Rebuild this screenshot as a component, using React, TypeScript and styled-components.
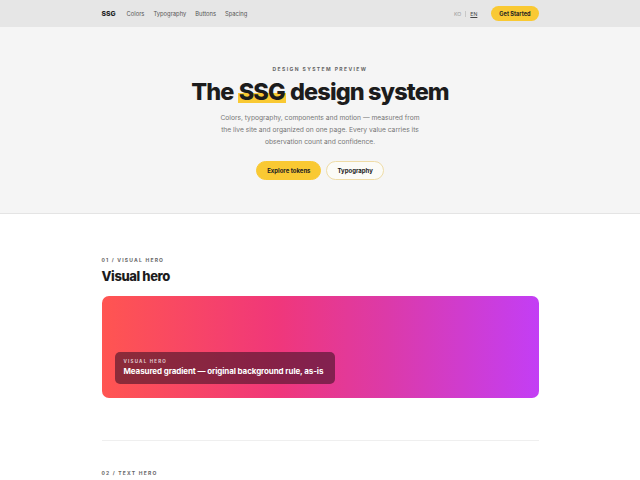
import React from "react";
import styled, { createGlobalStyle } from "styled-components";

const GlobalStyle = createGlobalStyle`
  html, body {
    margin: 0;
    padding: 0;
    background: #ffffff;
    font-family: Inter, "Liberation Sans", Arial, sans-serif;
    color: #1c1c1c;
  }
  * { box-sizing: border-box; }
`;

const Header = styled.header`
  height: 27px;
  background: #e6e6e6;
  display: flex;
  justify-content: center;
`;

const Inner = styled.div`
  width: 437px;
  display: flex;
  align-items: center;
  justify-content: space-between;
`;

const NavLeft = styled.nav`
  display: flex;
  align-items: center;
  gap: 9px;
`;

const Logo = styled.span`
  font-size: 6.8px;
  font-weight: 800;
  margin-right: 2px;
  color: #222;
`;

const NavLink = styled.a`
  font-size: 5.8px;
  color: #555;
  text-decoration: none;
`;

const NavRight = styled.div`
  display: flex;
  align-items: center;
  gap: 4px;
`;

const Lang = styled.span<{ $active?: boolean }>`
  font-size: 5.2px;
  color: ${(p) => (p.$active ? "#444" : "#999")};
  text-decoration: ${(p) => (p.$active ? "underline" : "none")};
`;

const Sep = styled.span`
  width: 1px;
  height: 6px;
  background: #c8c8c8;
`;

const SmallCta = styled.button`
  margin-left: 10px;
  height: 15px;
  padding: 0 8px;
  border: none;
  border-radius: 999px;
  background: #f9c933;
  font-family: inherit;
  font-size: 5.6px;
  font-weight: 700;
  color: #222;
`;

const Hero = styled.section`
  background: #f5f5f5;
  border-bottom: 1px solid #e4e4e4;
  height: 187px;
  display: flex;
  flex-direction: column;
  align-items: center;
  padding-top: 39px;
`;

const Eyebrow = styled.div`
  font-size: 5px;
  font-weight: 700;
  letter-spacing: 1.4px;
  color: #666;
`;

const Title = styled.h1`
  margin: 5px 0 0;
  font-size: 23.5px;
  font-weight: 800;
  letter-spacing: -0.9px;
  line-height: 30px;
  color: #1c1c1c;
`;

const Mark = styled.span`
  background: linear-gradient(transparent 55%, #f9c933 55%, #f9c933 90%, transparent 90%);
  padding: 0 1px;
`;

const Lead = styled.p`
  margin: 5px 0 0;
  width: 206px;
  text-align: center;
  font-size: 6.7px;
  line-height: 12px;
  color: #777;
`;

const Actions = styled.div`
  display: flex;
  gap: 5px;
  margin-top: 13px;
`;

const Pill = styled.button<{ $primary?: boolean }>`
  height: 19px;
  padding: 0 10px;
  border-radius: 999px;
  font-family: inherit;
  font-size: 6px;
  font-weight: 700;
  color: #222;
  background: ${(p) => (p.$primary ? "#f9c933" : "#fbfbf7")};
  border: 1px solid ${(p) => (p.$primary ? "#f9c933" : "#efdca6")};
`;

const Main = styled.main`
  display: flex;
  justify-content: center;
`;

const Column = styled.div`
  width: 437px;
  padding-top: 43px;
`;

const Section = styled.section`
  padding-bottom: 42px;
  border-bottom: 1px solid #efefef;
  margin-bottom: 29px;
`;

const Kicker = styled.div`
  font-size: 5px;
  font-weight: 700;
  letter-spacing: 1.2px;
  color: #666;
`;

const SectionTitle = styled.h2`
  margin: 2px 0 0;
  font-size: 13px;
  font-weight: 800;
  letter-spacing: -0.4px;
  line-height: 22px;
  color: #1c1c1c;
`;

const GradientCard = styled.div`
  margin-top: 9px;
  height: 102px;
  border-radius: 7px;
  background: linear-gradient(90deg, #ff5551 0%, #f0377a 40%, #dc3aa8 65%, #c33ef5 100%);
  display: flex;
  align-items: flex-end;
  padding: 0 0 14px 13px;
`;

const Caption = styled.div`
  width: 220px;
  height: 32px;
  border-radius: 5px;
  background: rgba(70, 20, 40, 0.62);
  padding: 7px 9px 0;
`;

const CaptionLabel = styled.div`
  font-size: 4.5px;
  font-weight: 700;
  letter-spacing: 1.2px;
  color: rgba(255, 255, 255, 0.75);
`;

const CaptionText = styled.div`
  margin-top: 2px;
  font-size: 8px;
  font-weight: 700;
  color: #fff;
  letter-spacing: -0.1px;
  white-space: nowrap;
`;

export default function App() {
  return (
    <>
      <GlobalStyle />
      <Header>
        <Inner>
          <NavLeft>
            <Logo>SSG</Logo>
            <NavLink>Colors</NavLink>
            <NavLink>Typography</NavLink>
            <NavLink>Buttons</NavLink>
            <NavLink>Spacing</NavLink>
          </NavLeft>
          <NavRight>
            <Lang>KO</Lang>
            <Sep />
            <Lang $active>EN</Lang>
            <SmallCta>Get Started</SmallCta>
          </NavRight>
        </Inner>
      </Header>
      <Hero>
        <Eyebrow>DESIGN SYSTEM PREVIEW</Eyebrow>
        <Title>
          The <Mark>SSG</Mark> design system
        </Title>
        <Lead>
          Colors, typography, components and motion — measured from the live
          site and organized on one page. Every value carries its observation
          count and confidence.
        </Lead>
        <Actions>
          <Pill $primary>Explore tokens</Pill>
          <Pill>Typography</Pill>
        </Actions>
      </Hero>
      <Main>
        <Column>
          <Section>
            <Kicker>01 / VISUAL HERO</Kicker>
            <SectionTitle>Visual hero</SectionTitle>
            <GradientCard>
              <Caption>
                <CaptionLabel>VISUAL HERO</CaptionLabel>
                <CaptionText>
                  Measured gradient — original background rule, as-is
                </CaptionText>
              </Caption>
            </GradientCard>
          </Section>
          <Kicker>02 / TEXT HERO</Kicker>
        </Column>
      </Main>
    </>
  );
}
